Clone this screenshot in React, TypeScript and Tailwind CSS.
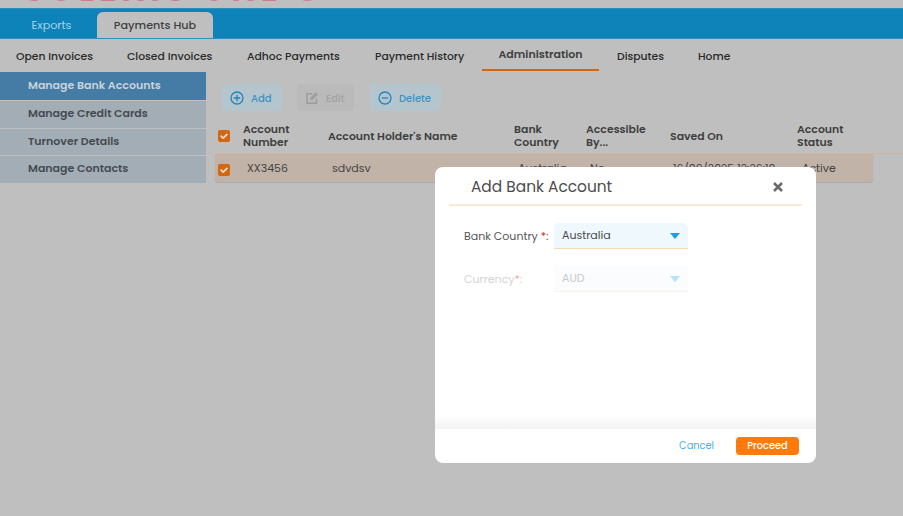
const navItems = [
  { label: "Open Invoices", cls: "w-[111px]" },
  { label: "Closed Invoices", cls: "w-[120px]" },
  { label: "Adhoc Payments", cls: "w-[128px]" },
  { label: "Payment History", cls: "w-[107px]" },
  { label: "Administration", cls: "mr-[18px] w-[117px] justify-center" },
  { label: "Disputes", cls: "w-[81px]" },
  { label: "Home", cls: "w-[60px]" },
];
const sideItems = ["Manage Bank Accounts", "Manage Credit Cards", "Turnover Details", "Manage Contacts"];

function Check() {
  return (
    <span className="flex h-[12px] w-[12px] items-center justify-center rounded-[2px] bg-[#d4660f]">
      <svg viewBox="0 0 12 12" className="h-[10px] w-[10px]" fill="none" stroke="#e8e0d8" strokeWidth="2" strokeLinecap="round" strokeLinejoin="round">
        <path d="M2.5 6.2 5 8.5l4.5-4.5" />
      </svg>
    </span>
  );
}

function Caret({ color }: { color: string }) {
  return (
    <svg viewBox="0 0 10 6" className="h-[6px] w-[10px]" style={{ fill: color }}>
      <path d="M0 0h10L5 6z" />
    </svg>
  );
}

export default function App() {
  return (
    <div className="relative h-[516px] w-[903px] overflow-hidden bg-[#bfbfbf] font-['Poppins','Inter','Liberation_Sans',sans-serif] text-[#3b3b3b]">
      <div className="h-[8px] overflow-hidden">
        <div className="-mt-[28px] whitespace-nowrap pl-[24px] text-[32px] font-bold leading-[36px] tracking-[5px] text-[#cf7f8c]">SOLENIS ONE C</div>
      </div>
      <div className="flex h-[31px] items-end border-y border-y-[#2b8fbc] bg-[#0e83b9] pl-[14px]">
        <div className="flex h-[26px] w-[75px] items-center justify-center text-[11.2px] text-[#a9d3e6]">Exports</div>
        <div className="ml-[8px] flex h-[26px] w-[116px] items-center justify-center rounded-t-[6px] bg-[#bfbfbf] text-[11.2px] font-medium text-[#3f3f3f]">Payments Hub</div>
      </div>

      <div className="flex h-[33px] pl-[16px] text-[10.8px] font-medium text-[#2a2a2a]">
        {navItems.map((item) => (
          <div key={item.label} className={item.label === "Administration" ? `flex h-[32px] items-center border-b-2 border-b-[#d4660f] pt-[1px] text-[11px] font-semibold text-[#404040] ${item.cls}` : `flex h-[33px] items-center pt-[3px] ${item.cls}`}>
            {item.label}
          </div>
        ))}
      </div>

      <div className="flex">
        <aside className="w-[206px] shrink-0 text-[11px] font-semibold">
          {sideItems.map((item, i) => (
            <div key={item} className={i === 0 ? "flex h-[28px] items-center bg-[#447ca6] pb-[2px] pl-[28px] text-[#c9d3da]" : "mt-px flex h-[26.6px] items-center bg-[#a3adb5] pb-[2px] pl-[28px] text-[#454b50]"}>
              {item}
            </div>
          ))}
        </aside>

        <main className="flex-1 pl-[9px] pt-[12px]">
          <div className="flex gap-[15px] pl-[7px] text-[10px] font-medium">
            <button className="flex h-[27px] w-[60px] items-center gap-[7px] rounded-[4px] bg-[#b5c5cd] pl-[8px] text-[#3b91c1]">
              <svg viewBox="0 0 14 14" className="h-[14px] w-[14px]" fill="none" stroke="#1f86bd" strokeWidth="1.3"><circle cx="7" cy="7" r="6" /><path d="M7 3.8v6.4M3.8 7h6.4" /></svg>
              <span className="pt-[1px]">Add</span>
            </button>
            <button className="flex h-[27px] w-[57px] items-center gap-[7px] rounded-[4px] bg-[#bababa] pl-[8px] text-[#a3a3a3]">
              <svg viewBox="0 0 14 14" className="h-[14px] w-[14px]" fill="none" stroke="#9d9d9d" strokeWidth="1.5"><path d="M11.5 7.5v4.7h-9.5v-9.5h5.2" /><path d="M5.5 8.8l.4-2.2 5-5 1.8 1.8-5 5z" fill="#9d9d9d" strokeWidth="0.6" /></svg>
              <span className="pt-[1px]">Edit</span>
            </button>
            <button className="ml-[1px] flex h-[27px] w-[71px] items-center gap-[7px] rounded-[4px] bg-[#b5c5cd] pl-[8px] text-[#3b91c1]">
              <svg viewBox="0 0 14 14" className="h-[14px] w-[14px]" fill="none" stroke="#1f86bd" strokeWidth="1.3"><circle cx="7" cy="7" r="6" /><path d="M3.8 7h6.4" /></svg>
              <span className="pt-[1px]">Delete</span>
            </button>
          </div>

          <div className="mt-[10px] flex h-[33px] items-center border-b border-b-[#d2b49c] pb-[2px] text-[10.9px] font-semibold leading-[13px] text-[#3f3f3f]">
            <span className="ml-[3px] w-[25px]"><Check /></span>
            <span className="w-[85px]">Account<br />Number</span>
            <span className="w-[186px] whitespace-nowrap">Account Holder's Name</span>
            <span className="w-[72px]">Bank<br />Country</span>
            <span className="w-[84px]">Accessible<br />By...</span>
            <span className="w-[127px]">Saved On</span>
            <span>Account<br />Status</span>
          </div>
          <div className="flex h-[28px] w-[658px] items-center rounded-b-[3px] bg-[#c1b3a8] text-[11px] text-[#444444] shadow-[0_1px_1px_#a9a9a9]">
            <span className="ml-[3px] mt-[3px] w-[29px]"><Check /></span>
            <span className="w-[85px]">XX3456</span>
            <span className="w-[186px]">sdvdsv</span>
            <span className="w-[72px]">Australia</span>
            <span className="w-[83px]">No</span>
            <span className="w-[129px]">16/09/2025 12:26:10</span>
            <span>Active</span>
          </div>
        </main>
      </div>

      <div className="absolute left-[435px] top-[167px] flex h-[296px] w-[381px] flex-col rounded-[8px] bg-white">
        <div className="mx-[14px] flex h-[39px] items-center justify-between border-b-2 border-b-[#fde9d6] pl-[22px] pr-[19px] pt-[3px]">
          <span className="text-[15.4px] text-[#4d4d4d]">Add Bank Account</span>
          <svg viewBox="0 0 10 10" className="h-[10px] w-[10px]" fill="none" stroke="#6b6b6b" strokeWidth="2.6"><path d="M1 1l8 8M9 1l-8 8" /></svg>
        </div>
        <div className="flex-1 pl-[29px] pt-[17px] text-[11px] [background:linear-gradient(to_bottom,#fff_0,#fff_calc(100%_-_14px),#f3f3f3_100%)]">
          <div className="flex items-center">
            <span className="w-[90px] whitespace-nowrap pt-[1px] text-[#555555]">Bank Country <span className="text-[#e02020]">*</span>:</span>
            <div className="flex h-[26px] w-[134px] items-center justify-between rounded-t-[5px] border-b border-b-[#fcd9b6] bg-[#eff8fd] pl-[8px] pr-[8px] text-[#4a4a4a]">
              Australia
              <Caret color="#1a9fe3" />
            </div>
          </div>
          <div className="mt-[17px] flex items-center">
            <span className="w-[90px] whitespace-nowrap pt-[1px] text-[#d4d4d4]">Currency<span className="text-[#f3a9a9]">*</span>:</span>
            <div className="flex h-[26px] w-[134px] items-center justify-between rounded-t-[5px] border-b border-b-[#fdf1e6] bg-[#fafcfe] pl-[8px] pr-[8px] text-[#c9c9c9]">
              AUD
              <Caret color="#b5e2f8" />
            </div>
          </div>
        </div>
        <div className="flex h-[34px] items-center justify-end pr-[17px] text-[9.8px]">
          <span className="mr-[22px] pt-[1px] text-[#41b0ee]">Cancel</span>
          <button className="h-[18px] w-[63px] rounded-[4px] bg-[#ff7a0a] pt-[1px] text-[9.8px] font-medium text-white">Proceed</button>
        </div>
      </div>
    </div>
  );
}
